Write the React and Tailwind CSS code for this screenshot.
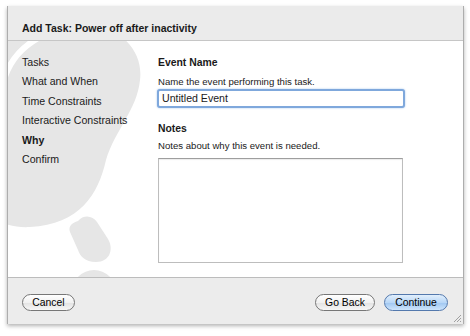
export default function App() {
    return (
        <div className="w-[470px] h-[336px] bg-white pt-[6px] pl-[7px] font-['Liberation_Sans',Arial,sans-serif] text-[#1a1a1a]">
            <div className="w-[457px] h-[318px] flex flex-col border-x border-[#adadad] shadow-[0_2px_4px_rgba(0,0,0,0.3)]">
                {/* Header */}
                <div className="h-[35px] shrink-0 bg-[#ebebeb] border-b border-[#c6c6c6] flex items-end px-[14px] pb-[5px]">
                    <h1 className="text-[10.5px] leading-[13px] font-bold">Add Task: Power off after inactivity</h1>
                </div>

                {/* Body */}
                <div className="relative h-[236px] shrink-0 bg-white overflow-hidden">
                    <svg className="absolute inset-0" width="455" height="236" viewBox="8 41 455 236">
                        <path
                            d="M30,15 C100,10 145,40 140,80 C137,110 115,130 106,160 C98,195 80,224 30,227 C0,229 -30,210 -30,180 L-30,15 Z"
                            fill="#e6e6e6"
                        />
                        <path d="M4,80 Q12,52 40,37" stroke="#fff" strokeWidth="6" fill="none" />
                        <path
                            d="M78,221 C84,214 93,216 97,222 L108,239 C114,249 110,262 96,262 C85,262 80,256 78,250 L70,232 C68,226 72,223 78,221 Z"
                            fill="#e6e6e6"
                        />
                        <circle cx="94" cy="292" r="22" fill="#e6e6e6" />
                    </svg>

                    <div className="relative flex pl-[14px] pt-[11.5px]">
                        {/* Steps */}
                        <ul className="w-[136px] shrink-0 text-[10.6px] leading-[19.5px]">
                            <li>Tasks</li>
                            <li>What and When</li>
                            <li>Time Constraints</li>
                            <li>Interactive Constraints</li>
                            <li className="font-bold">Why</li>
                            <li>Confirm</li>
                        </ul>

                        {/* Form */}
                        <div className="flex flex-col">
                            <h2 className="text-[10.4px] leading-[19.5px] font-bold">Event Name</h2>
                            <p className="mt-[3.5px] text-[9.6px] leading-[12px]">Name the event performing this task.</p>
                            <div className="mt-[1.5px] -ml-[1px] w-[248px] h-[19px] rounded-[3px] border-2 border-[#7fa8dc] shadow-[0_0_2px_#9cc0ec] bg-white flex items-center pl-[3px]">
                                <span className="text-[10.6px] leading-[13px]">Untitled Event</span>
                            </div>
                            <h2 className="mt-[13.8px] text-[10.4px] leading-[13px] font-bold">Notes</h2>
                            <p className="mt-[5.7px] text-[9.6px] leading-[12px]">Notes about why this event is needed.</p>
                            <div className="mt-[5.5px] w-[245px] h-[105px] bg-white border border-[#bdbdbd] border-t-[#9e9e9e] shadow-[inset_0_1px_1px_rgba(0,0,0,0.08)]"></div>
                        </div>
                    </div>
                </div>

                {/* Footer */}
                <div className="relative flex-1 bg-[#ececec] border-t border-[#bcbcbc] flex items-start justify-between pl-[14px] pr-[15px] pt-[16px]">
                    <button className="w-[53px] h-[17px] rounded-full border border-[#777] bg-[linear-gradient(#ffffff,#f1f1f1_50%,#e2e2e2_51%,#f7f7f7)] text-[10.4px] leading-[15px] text-black">
                        Cancel
                    </button>
                    <div className="flex gap-[9px]">
                        <button className="w-[60px] h-[17px] rounded-full border border-[#777] bg-[linear-gradient(#ffffff,#f1f1f1_50%,#e2e2e2_51%,#f7f7f7)] text-[10.4px] leading-[15px] text-black">
                            Go Back
                        </button>
                        <button className="w-[64px] h-[17px] rounded-full border border-[#5479ad] bg-[linear-gradient(#e2effc,#b8d7f7_50%,#9ec6f1_51%,#cfe5fb)] text-[10.4px] leading-[15px] text-black">
                            Continue
                        </button>
                    </div>
                    <svg className="absolute right-[1px] bottom-[1px]" width="10" height="10" viewBox="0 0 10 10">
                        <path d="M9,2 L2,9 M9,5 L5,9 M9,8 L8,9" stroke="#a0a0a0" strokeWidth="1" />
                    </svg>
                </div>
            </div>
        </div>
    )
}
